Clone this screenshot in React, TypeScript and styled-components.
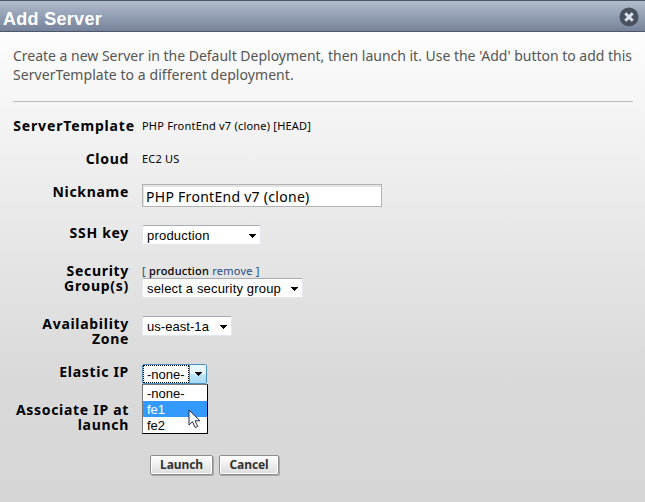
import React from 'react';
import styled, { createGlobalStyle } from 'styled-components';

const GlobalStyle = createGlobalStyle`
  * { box-sizing: border-box; }
  body { margin: 0; overflow: hidden; }
`;

const Dialog = styled.main`
  width: 645px;
  height: 502px;
  display: flex;
  flex-direction: column;
  overflow: hidden;
  font-family: 'Noto Sans', 'Open Sans', sans-serif;
  color: #000;
  background: linear-gradient(#fdfdfd 32px, #e9e9e9 220px, #dadada 370px, #d6d6d6 502px);
`;

const TitleBar = styled.header`
  height: 32px;
  flex: none;
  display: flex;
  align-items: center;
  justify-content: space-between;
  padding: 3px 5px 0 3px;
  border-top: 1px solid #4e5869;
  border-bottom: 1px solid #4e5869;
  background: linear-gradient(#b1bccc, #75829a);
`;

const Title = styled.h1`
  margin: 3px 0 0;
  font: bold 18px/24px 'Liberation Sans', Arial, sans-serif;
  letter-spacing: 0.3px;
  color: #fff;
`;

const CloseButton = styled.button`
  width: 22px;
  height: 22px;
  padding: 0;
  border: 0;
  background: none;
  svg { display: block; }
`;

const Intro = styled.section`
  flex: none;
  height: 70px;
  margin: 0 12px 0 13px;
  padding-top: 14px;
  border-bottom: 1px solid #bcbcbc;
`;

const Sentence = styled.div<{ $spacing: number }>`
  font-size: 14px;
  line-height: 19px;
  white-space: nowrap;
  color: #555;
  letter-spacing: ${(p) => p.$spacing}px;
`;

const Form = styled.form`
  margin-top: 16px;
  display: grid;
  grid-template-columns: 128px 1fr;
  column-gap: 14px;
  grid-template-rows: 33px 33px 41px 38px 53px 48px 38px 53px;
`;

const Label = styled.label<{ $wide?: boolean }>`
  justify-self: end;
  margin-right: ${(p) => (p.$wide ? -7 : -1)}px;
  text-align: right;
  font-size: 14px;
  font-weight: 700;
  line-height: 15px;
  white-space: pre-line;
  letter-spacing: ${(p) => (p.$wide ? 0.85 : 0.7)}px;
`;

const Value = styled.div`
  font-size: 11px;
  line-height: 16px;
  white-space: nowrap;
  letter-spacing: 0.21px;
`;

const TextInput = styled.input`
  display: block;
  width: 240px;
  height: 23px;
  padding: 2px 3px 0;
  border: 1px solid #b3b3b3;
  border-radius: 0;
  background: #fff;
  box-shadow: inset 1px 2px 0 #e2e2e2;
  font: 14px/18px 'Noto Sans', sans-serif;
  letter-spacing: 0.28px;
  outline: 0;
`;

const SelectBox = styled.div<{ $width: number; $spacing?: number }>`
  width: ${(p) => p.$width}px;
  height: 20px;
  display: flex;
  align-items: center;
  justify-content: space-between;
  padding: 2px 4px 0 4px;
  border: 1px solid #e3e6ee;
  border-top-color: #a9abb3;
  border-radius: 2px;
  background: #fff;
  font: 13px/16px 'Liberation Sans', Arial, sans-serif;
  letter-spacing: ${(p) => p.$spacing ?? 0}px;
  white-space: nowrap;
`;

const OpenSelect = styled.div`
  position: relative;
  width: 65px;
  height: 20px;
  display: flex;
  border: 1px solid #4b8fbf;
  border-radius: 2px;
  background: #fff;
  font: 13px/16px 'Liberation Sans', Arial, sans-serif;
`;

const FocusedValue = styled.div`
  width: 46px;
  padding: 1px 0 0 3px;
  border: 1px dotted #000;
`;

const DropButton = styled.div`
  flex: 1;
  display: flex;
  align-items: center;
  justify-content: center;
  border-left: 1px solid #4b8fbf;
  background: linear-gradient(#e8f6fd 48%, #bee6fa 50%, #a8d9f4);
`;

const OptionList = styled.div`
  position: absolute;
  left: -1px;
  top: 19px;
  width: 66px;
  height: 50px;
  border: 1px solid #000;
  border-top-color: #777;
  border-left-color: #777;
  background: #fff;
`;

const Option = styled.div<{ $active?: boolean }>`
  height: 16px;
  padding-left: 4px;
  line-height: 17px;
  color: ${(p) => (p.$active ? '#fff' : '#000')};
  background: ${(p) => (p.$active ? '#3399ff' : '#fff')};
`;

const Pointer = styled.svg`
  position: absolute;
  left: 45px;
  top: 44px;
`;

const GroupLine = styled.div`
  height: 15px;
  font-size: 11px;
  line-height: 16px;
  white-space: nowrap;
  letter-spacing: 0.23px;
  a, i { color: #1f4c82; font-style: normal; }
  b { font-weight: 500; }
`;

const Actions = styled.footer`
  display: flex;
  gap: 6px;
  margin-left: 150px;
`;

const ActionButton = styled.button<{ $width: number }>`
  width: ${(p) => p.$width}px;
  height: 20px;
  padding: 0;
  border: 1px solid #8d8d8d;
  border-radius: 2px;
  box-shadow: inset 0 0 0 1px #fff, 1px 1px 0 #a8a8a8;
  background: linear-gradient(#fff, #dcdcdc);
  color: #333;
  font: bold 12px/16px 'Noto Sans', sans-serif;
  letter-spacing: -0.1px;
`;

const Arrow = () => (
  <svg width="7" height="4" viewBox="0 0 7 4" shapeRendering="crispEdges">
    <path d="M0 0h7v1H6v1H5v1H4v1H3V3H2V2H1V1H0z" />
  </svg>
);

export default function App() {
  return (
    <Dialog>
      <GlobalStyle />
      <TitleBar>
        <Title>Add Server</Title>
        <CloseButton aria-label="Close">
          <svg width="22" height="22" viewBox="0 0 22 22">
            <circle cx="11" cy="10.7" r="9.6" fill="#8e9aaf" />
            <circle cx="11" cy="10" r="9.5" fill="#485160" />
            <path d="M7.3 6.3l7.4 7.4M14.7 6.3l-7.4 7.4" stroke="#dce3ed" strokeWidth="3" />
          </svg>
        </CloseButton>
      </TitleBar>
      <Intro>
        <Sentence $spacing={-0.012}>
          Create a new Server in the Default Deployment, then launch it. Use the 'Add' button to add this
        </Sentence>
        <Sentence $spacing={0.06}>ServerTemplate to a different deployment.</Sentence>
      </Intro>
      <Form>
        <Label $wide>ServerTemplate</Label>
        <Value>PHP FrontEnd v7 (clone) [HEAD]</Value>
        <Label>Cloud</Label>
        <Value>EC2 US</Value>
        <Label>Nickname</Label>
        <TextInput defaultValue="PHP FrontEnd v7 (clone)" />
        <Label>SSH key</Label>
        <SelectBox $width={119} $spacing={0.2}>production<Arrow /></SelectBox>
        <Label>{'Security\nGroup(s)'}</Label>
        <div>
          <GroupLine><i>[</i> <b>production</b> <a>remove</a> <i>]</i></GroupLine>
          <SelectBox $width={161} $spacing={0.17}>select a security group<Arrow /></SelectBox>
        </div>
        <Label>{'Availability\nZone'}</Label>
        <SelectBox $width={90} $spacing={0.05}>us-east-1a<Arrow /></SelectBox>
        <Label>Elastic IP</Label>
        <OpenSelect>
          <FocusedValue>-none-</FocusedValue>
          <DropButton><Arrow /></DropButton>
          <OptionList>
            <Option>-none-</Option>
            <Option $active>fe1</Option>
            <Option>fe2</Option>
          </OptionList>
          <Pointer width="13" height="20" viewBox="0 0 13 20">
            <path d="M1 1v15l3.5-3.3 2.6 5.8 2.6-1.1-2.6-5.6H12z" fill="#fff" stroke="#222a44" />
          </Pointer>
        </OpenSelect>
        <Label>{'Associate IP at\nlaunch'}</Label>
      </Form>
      <Actions>
        <ActionButton type="button" $width={63}>Launch</ActionButton>
        <ActionButton type="button" $width={60}>Cancel</ActionButton>
      </Actions>
    </Dialog>
  );
}
